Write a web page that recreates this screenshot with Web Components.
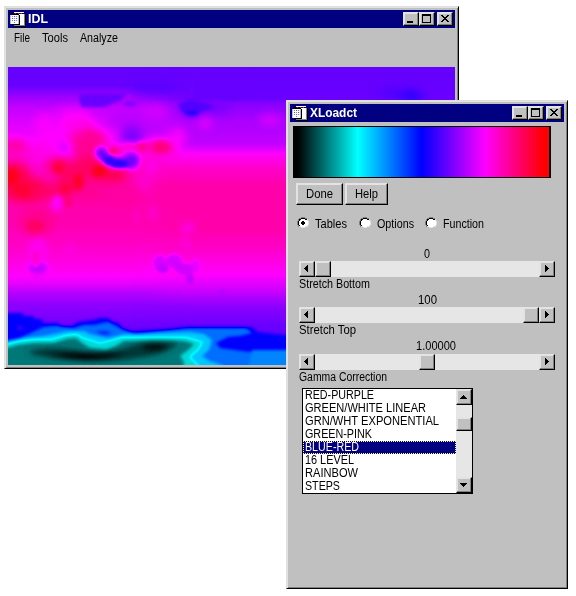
<!DOCTYPE html>
<html lang="en"><head><meta charset="utf-8"><title>IDL</title>
<style>
body{margin:0;width:576px;height:596px;background:#fff;position:relative;overflow:hidden;font:12px/14px "Liberation Sans",Arial,sans-serif;color:#000}
#map{position:absolute;left:4px;top:6px;width:455px;height:363px}
#ct{position:absolute;left:286px;top:100px;width:282px;height:489px}
.menu{display:flex;height:39px;padding:3px 0 0 6px;box-sizing:border-box}
.menu fit-text+fit-text{margin-left:12px}
.panel{padding:4px 9px 0 3px}
.buttons{display:flex;gap:2px;margin:5px 0 0 3px}
.radios{display:flex;margin:12px 0 0 4px;height:14px}
value-slider{margin-left:6px}
</style></head><body>
<win-frame id="map" caption="IDL" cw="20">
 <nav class="menu"><fit-text w="16">File</fit-text><fit-text w="26">Tools</fit-text><fit-text w="38">Analyze</fit-text></nav>
 <heat-map></heat-map>
</win-frame>
<win-frame id="ct" caption="XLoadct" cw="47">
 <div class="panel">
  <color-bar></color-bar>
  <div class="buttons"><push-button style="width:47px"><fit-text w="27">Done</fit-text></push-button><push-button style="width:43px"><fit-text w="23">Help</fit-text></push-button></div>
  <div class="radios"><radio-item checked style="width:62px"><fit-text w="32">Tables</fit-text></radio-item><radio-item style="width:66px"><fit-text w="37">Options</fit-text></radio-item><radio-item><fit-text w="41">Function</fit-text></radio-item></div>
  <value-slider value="0" vw="6" pos="0" label="Stretch Bottom" lw="71" style="margin-top:16px"></value-slider>
  <value-slider value="100" vw="19" pos="208" label="Stretch Top" lw="57" style="margin-top:2px"></value-slider>
  <value-slider value="1.00000" vw="40" pos="104" label="Gamma Correction" lw="88" style="margin-top:2px;--gap:1px;--shift:17px"></value-slider>
  <list-box></list-box>
 </div>
</win-frame>
<script>
class Base extends HTMLElement{
  render(html){if(!this.shadowRoot)this.attachShadow({mode:'open'});this.shadowRoot.innerHTML=html}
}
/* Text condensed or widened to a given width. */
customElements.define('fit-text',class extends Base{
  connectedCallback(){
    this.render(`<style>:host{display:block;flex:none;height:14px;white-space:nowrap}span{display:inline-block;transform-origin:0 0}</style><span><slot></slot></span>`);
    const w=+this.getAttribute('w'),s=this.shadowRoot.querySelector('span');
    this.style.width='max-content';
    const n=s.getBoundingClientRect().width;
    this.style.width=w+'px';
    if(n)s.style.transform=`scaleX(${w/n})`;
  }
});
const bevel='background:#c0c0c0;border:1px solid;border-color:#e3e3e3 #000 #000 #e3e3e3;box-shadow:inset -1px -1px #808080,inset 1px 1px #e3e3e3;box-sizing:border-box;';
customElements.define('win-frame',class extends Base{
  connectedCallback(){this.render(`<style>
  :host{display:flex;flex-direction:column;box-sizing:border-box;background:#c0c0c0;border:1px solid;border-color:#dfdfdf #000 #000 #dfdfdf;box-shadow:inset 1px 1px #e3e3e3,inset -1px -1px #808080;padding:3px}
  header{height:18px;flex:none;background:#000080;color:#fff;display:flex;align-items:center;padding:0 2px;font-weight:700}
  header>svg{width:16px;height:16px;margin-right:2px;flex:none}
  fit-text{margin-right:auto}
  b{display:block;width:16px;height:14px;${bevel}}b svg{display:block;width:14px;height:12px}
  b:last-child{margin-left:2px}
  </style><header><svg viewBox="0 0 16 16" shape-rendering="crispEdges">
  <path d="M3 2h11v12H3z" fill="#fff"/><path d="M14 3h1v12H4v-1h10z" fill="#808080"/><path d="M15 3h1v13H4v-1h11z" fill="#000"/><path d="M2 2h12v1H2z" fill="#000"/><path d="M4 1h10v1H4z" fill="#fff"/><path d="M5 2h1v1H5zM8 2h1v1H8zM11 2h1v1h-1z" fill="#c0c"/>
  <path d="M1 4h7v9H1z" fill="#fff"/><path d="M8 4h1v9H8z" fill="#c0c0c0"/><path d="M9 4h1v10H2v-1h7zM1 3h8v1H1z" fill="#000"/><path d="M0 4h1v9H0z" fill="#c0c0c0"/>
  <path d="M2 5h1v1H2zM6 5h1v1H6zM4 7h1v1H4zM2 9h1v1H2zM6 9h1v1H6zM4 11h1v1H4z" fill="#0cc"/><path d="M4 5h1v1H4zM2 7h1v1H2zM6 7h1v1H6zM4 9h1v1H4z" fill="#f0f"/></svg>
  <fit-text w="${this.getAttribute('cw')}">${this.getAttribute('caption')}</fit-text>
  <b><svg viewBox="0 0 14 12" shape-rendering="crispEdges"><path d="M3 8h6v2H3z"/></svg></b><b><svg viewBox="0 0 14 12" shape-rendering="crispEdges"><path fill-rule="evenodd" d="M2 1h9v9H2zM3 3v6h7V3z"/></svg></b><b><svg viewBox="0 0 14 12" shape-rendering="crispEdges"><path d="M3 2h2v1h1v1h2V3h1V2h2v1h-1v1H9v1H8v1h1v1h1v1h1v1H9V8H8V7H6v1H5v1H3V8h1V7h1V6h1V5H5V4H4V3H3z"/></svg></b></header><slot></slot>`)}
});
customElements.define('color-bar',class extends Base{
  connectedCallback(){this.render(`<style>:host{display:block;width:258px;height:52px;box-sizing:border-box;border:1px solid #000;border-right-width:2px;background:linear-gradient(90deg,#000 1.5%,#0ff 25%,#00f 50%,#f0f 75%,#f00 98%)}</style>`)}
});
customElements.define('push-button',class extends Base{
  connectedCallback(){this.render(`<style>:host{display:flex;justify-content:center;align-items:center;height:22px;${bevel}}</style><slot></slot>`)}
});
customElements.define('radio-item',class extends Base{
  connectedCallback(){this.render(`<style>:host{display:flex;gap:6px}svg{width:12px;height:12px;flex:none}</style>
  <svg viewBox="0 0 12 12" shape-rendering="crispEdges"><path fill="#fff" d="M4 1h4v1h2v2h1v4h-1v2H8v1H4v-1H2V8H1V4h1V2h2z"/><path fill="#808080" d="M4 0h4v1H4zM2 1h2v1H2zM8 1h2v1H8zM1 2h1v2H1zM0 4h1v4H0zM1 8h1v2H1z"/><path d="M4 1h4v1H4zM2 2h2v1H2zM8 2h2v1H8zM2 3h1v1H2zM1 4h1v4H1zM2 8h1v1H2z"/><path fill="#e3e3e3" d="M10 2h1v2h1v4h-1v2h-1V8h1V4h-1zM8 9h2v1H8zM2 9h2v1H2zM4 10h4v1H4z"/>${this.hasAttribute('checked')?'<path d="M5 4h2v1h1v2H7v1H5V7H4V5h1z"/>':''}</svg><slot></slot>`)}
});
/* Arrow button shared by sliders and the list's scrollbar. */
customElements.define('arrow-button',class extends Base{
  connectedCallback(){
    const d={left:'M8 3v7H7V9H6V8H5V7H4V6h1V5h1V4h1V3z',right:'M5 3v7h1V9h1V8h1V7h1V6H8V5H7V4H6V3z',up:'M6 5h1v1h1v1h1v1h1v1H3V8h1V7h1V6h1z',down:'M3 5h7v1H9v1H8v1H7v1H6V8H5V7H4V6H3z'}[this.getAttribute('dir')];
    this.render(`<style>:host{display:block;width:16px;height:16px;flex:none;${bevel}}svg{display:block;width:14px;height:14px}</style>${d?`<svg viewBox="0 0 14 14" shape-rendering="crispEdges"><path d="${d}"/></svg>`:''}`)}
});
customElements.define('value-slider',class extends Base{
  connectedCallback(){const a=n=>this.getAttribute(n);this.render(`<style>:host{display:block;width:256px}
  .v{display:flex;justify-content:center;height:14px;padding-left:var(--shift,0px)}.t{display:flex;height:16px;background:#e6e6e6;margin-top:var(--gap,0px)}.t arrow-button:last-child{margin-left:auto}.l{height:14px}
  </style><div class="v"><fit-text w="${a('vw')}">${a('value')}</fit-text></div><div class="t"><arrow-button dir="left"></arrow-button><arrow-button style="margin-left:${a('pos')}px"></arrow-button><arrow-button dir="right"></arrow-button></div><div class="l"><fit-text w="${a('lw')}">${a('label')}</fit-text></div>`)}
});
customElements.define('list-box',class extends Base{
  connectedCallback(){
    const rows=[['RED-PURPLE',69],['GREEN/WHITE LINEAR',121],['GRN/WHT EXPONENTIAL',134],['GREEN-PINK',67],['BLUE-RED',54],['16 LEVEL',49],['RAINBOW',53],['STEPS',35]];
    this.render(`<style>:host{display:flex;width:171px;height:106px;box-sizing:border-box;border:1px solid #000;background:#fff;margin:4px 0 0 9px}
    .r{width:153px}.r div{height:13px;padding-left:2px;box-sizing:border-box;line-height:13px}
    .r .on{background:#000080;color:#fff;outline:1px dotted #ffff80;outline-offset:-1px}
    .s{width:16px;background:#e6e6e6;display:flex;flex-direction:column}</style>
    <div class="r">${rows.map((r,i)=>`<div class="${i==4?'on':''}"><fit-text w="${r[1]}">${r[0]}</fit-text></div>`).join('')}</div>
    <div class="s"><arrow-button dir="up"></arrow-button><arrow-button style="height:14px;margin-top:12px"></arrow-button><arrow-button dir="down" style="margin-top:auto"></arrow-button></div>`)}
});
/* A greyscale temperature field, run through the BLUE-RED palette by a filter. */
customElements.define('heat-map',class extends Base{
  connectedCallback(){
    const g=v=>`rgb(${v},${v},${v})`;
    const e=l=>l.map(([x,y,rx,ry,v,o=1])=>`<ellipse cx="${x}" cy="${y}" rx="${rx}" ry="${ry}" fill="${g(v)}" opacity="${o}"/>`).join('');
    const grad=(id,s)=>`<linearGradient id="${id}" gradientUnits="userSpaceOnUse" x1="0" y1="67" x2="0" y2="365">${s.map(([y,v])=>`<stop offset="${(y-67)/298}" stop-color="${g(v)}"/>`).join('')}</linearGradient>`;
    this.render(`<style>:host{display:block;width:447px;height:298px}svg{display:block;width:447px;height:298px}</style>
    <svg viewBox="8 67 447 298"><defs>
    ${grad('L',[[67,153],[86,154],[98,168],[108,177],[125,184],[142,190],[155,196],[170,206],[185,213],[225,211],[252,203],[272,194],[283,186],[293,173],[305,163],[330,154],[365,152]])}
    ${grad('R',[[67,153],[99,154],[104,162],[120,170],[144,176],[151,187],[155,193],[166,203],[185,212],[230,212],[250,204],[275,191],[290,179],[307,162],[326,154],[365,150]])}
    <linearGradient id="mg"><stop offset=".28" stop-color="#000"/><stop offset=".42" stop-color="#fff"/></linearGradient>
    <mask id="m"><rect x="8" y="67" width="447" height="298" fill="url(#mg)"/></mask>
    <filter id="b1" x="-20%" y="-20%" width="140%" height="140%" color-interpolation-filters="sRGB"><feGaussianBlur stdDeviation="1.5"/></filter>
    <filter id="b2" x="-20%" y="-20%" width="140%" height="140%" color-interpolation-filters="sRGB"><feGaussianBlur stdDeviation="2.6"/></filter>
    <filter id="b3" x="-20%" y="-20%" width="140%" height="140%" color-interpolation-filters="sRGB"><feGaussianBlur stdDeviation="4"/></filter>
    <filter id="pal" filterUnits="userSpaceOnUse" x="8" y="67" width="447" height="298" color-interpolation-filters="sRGB"><feComponentTransfer><feFuncR type="table" tableValues="0 0 0 1 1"/><feFuncG type="table" tableValues="0 1 0 0 0"/><feFuncB type="table" tableValues="0 1 1 1 0"/></feComponentTransfer></filter>
    </defs><g filter="url(#pal)">
    <rect x="8" y="67" width="447" height="298" fill="url(#L)"/><rect x="8" y="67" width="447" height="298" fill="url(#R)" mask="url(#m)"/>
    <g filter="url(#b3)">${e([[72,114,18,7,186],[45,127,12,14,189],[78,124,18,10,195],[88,140,20,12,209],[90,152,16,22,218],[52,137,14,10,191],[130,120,22,10,174],[132,136,12,10,160],[155,112,14,7,180],[151,128,12,8,174],[15,146,12,7,214],[20,158,20,4,204],[40,150,12,8,196],[160,148,18,8,208],[178,137,8,9,190],[14,176,16,14,234],[26,190,24,12,236],[52,192,16,9,228],[60,166,14,8,228],[72,182,14,14,230],[92,168,20,12,230],[37,222,18,14,219],[112,175,16,7,236],[150,168,10,10,204],[145,182,8,9,203],[215,107,14,6,157],[192,111,10,4,146],[400,93,22,5,146],[412,97,12,5,138],[95,192,20,10,218],[205,123,8,6,184],[270,120,12,6,180],[155,88,24,4,149],[28,272,3,3,200],[120,195,20,12,214]])}</g>
    <g filter="url(#b1)">
    <path d="M80 94h50v4l-12 3-9 4-4 2H82l-3-7z" fill="${g(154)}"/>
    <path d="M124 97l4-4 3 4v4h-10z" fill="${g(170)}"/>
    <path d="M178 104l12-4 18 4 6 4-14 4-8 4-10-4z" fill="${g(148)}"/>
    ${e([[192,113,7,2.5,138],[130,104,6,2,158]])}
    </g>
    <g filter="url(#b2)">${e([[101,153,6,7,158],[108,159,7,6,146],[119,163,13,5,140],[131,161,8,8,156],[115,151,6,5,214],[129,147,9,4,203],[142,147,6,5,220],[161,147,9,6,224],[64,148,5,6,184],[57,203,6,8,192],[78,182,5,8,245],[12,177,7,9,248],[22,190,8,6,242],[99,171,7,6,250],[59,168,5,6,241],[65,189,5,6,238],[68,202,5,5,226],[152,166,4,7,196],[153,213,3,7,202],[188,228,7,6,200],[35,226,9,6,230],[186,243,5,8,202],[38,252,10,14,196],[38,268,10,6,176],[70,251,4,8,200]])}</g>
    <g filter="url(#b1)">${e([[109,161,4,3,140],[120,164,9,3,138],[113,151,4,3,220],[36,259,3,8,204],[160,263,7,8,182],[163,269,6,4,176],[174,261,8,7,181],[185,269,11,6,180],[190,279,4,5,176],[196,266,4,7,186],[172,273,6,3,194],[222,293,2,4,170,.6],[137,218,2,6,203,.7]])}</g>
    <g filter="url(#b1)">
    <path d="M0 313H22L24 316H33L35 319H42L43 323H58L61 326H72L78 322L92 320L100 318H109L111 321L119 323L122 328L132 331L150 330L170 329L190 327L252 327L258 332L275 334L300 336H455V380H0Z" fill="${g(128)}"/>
    <path d="M0 346L20 338L35 331L44 327L58 326L64 327L74 328L84 325L94 325L108 322L116 326L124 330L136 334L160 331L186 328H246L252 333L240 336L228 337L216 343L220 348L250 352L300 350V380H0Z" fill="${g(100)}"/>
    <path d="M96 332Q104 329 112 333Q104 337 96 332Z" fill="${g(118)}"/>
    <path d="M252 350H300V380H246Z" fill="${g(94)}"/>
    <ellipse cx="20" cy="328" rx="3" ry="2" fill="${g(142)}"/>
    <path d="M0 342L22 338L42 336L58 333L68 331H84L90 334L108 338L124 334L160 333L190 332L204 334L212 340L209 350L202 356L210 361L224 366V380H0Z" fill="${g(78)}"/>
    <path d="M0 346L18 341L36 339L52 339L66 335L76 334L84 338L100 343L112 340L122 337L150 337L186 337L203 342L198 350L190 357L198 365L206 380H0Z" fill="${g(54)}"/>
    <path d="M0 350L18 345L34 343L54 343L66 339L76 338L82 343L90 348L106 350L116 346L124 341H184L194 344L188 350L180 356L184 362L180 380H0Z" fill="${g(30)}"/>
    </g>
    <g filter="url(#b2)"><path d="M28 352Q48 345 76 350Q106 356 128 347Q146 339 178 343Q168 354 142 357Q106 364 70 360Q36 357 28 352Z" fill="${g(14)}"/><path d="M46 355Q84 352 126 353Q100 361 74 359Z" fill="#000"/><ellipse cx="154" cy="347" rx="12" ry="3" fill="${g(3)}"/></g>
    </g></svg>`)}
});
</script></body></html>
